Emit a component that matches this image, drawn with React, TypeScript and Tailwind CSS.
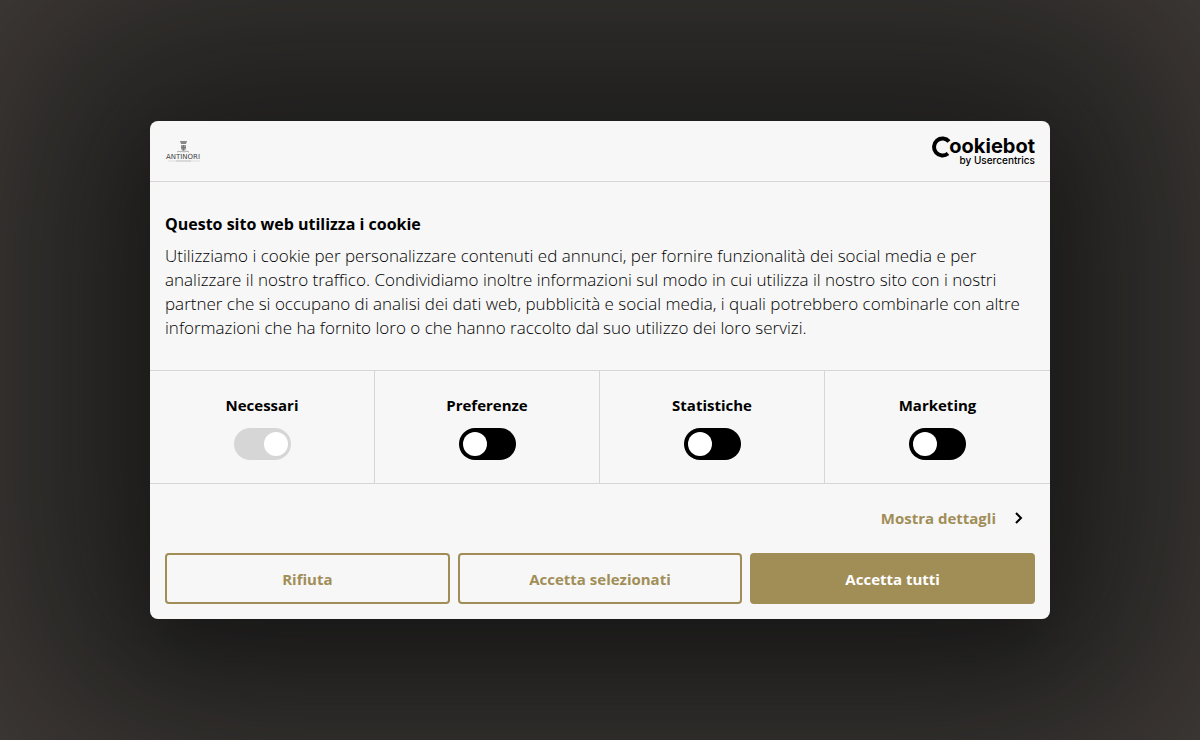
import { useState } from "react";

type Category = {
  id: string;
  label: string;
  locked?: boolean;
};

const CATEGORIES: Category[] = [
  { id: "necessary", label: "Necessari", locked: true },
  { id: "preferences", label: "Preferenze" },
  { id: "statistics", label: "Statistiche" },
  { id: "marketing", label: "Marketing" },
];

function AntinoriLogo() {
  return (
    <svg width="37" height="22" viewBox="0 0 37 22" role="img" aria-label="Antinori">
      <path d="M15 1h7l-1 3h-5z" fill="#888" />
      <path d="M16 5h5v4l-2 2h-1l-2-2z" fill="#999" />
      <path d="M18 5h1v5h-1zM16 7h5v1h-5z" fill="#777" />
      <path d="M12 12l2-1 1 1 2-1 2 1 2-1 3 1" fill="none" stroke="#aaa" strokeWidth="1" />
      <text
        x="18"
        y="19"
        textAnchor="middle"
        fontFamily="DejaVu Sans, sans-serif"
        fontSize="7"
        fill="#444"
      >
        ANTINORI
      </text>
      <path d="M3 21h8M26 21h9" stroke="#ddd" strokeWidth="1" />
      <path d="M11 21h15" stroke="#bbb" strokeWidth="1" />
    </svg>
  );
}

function CookiebotLogo() {
  return (
    <svg width="104" height="32" viewBox="0 0 104 32" role="img" aria-label="Cookiebot by Usercentrics">
      <path d="M18 6.5a8.5 8.5 0 1 0-1 12" fill="none" stroke="#000" strokeWidth="4" />
      <text
        x="104"
        y="18"
        textAnchor="end"
        fontFamily="Inter, sans-serif"
        fontSize="20"
        fontWeight="700"
        fill="#000"
      >
        ookiebot
      </text>
      <text
        x="104"
        y="29"
        textAnchor="end"
        fontFamily="Inter, sans-serif"
        fontSize="10"
        fontWeight="500"
        fill="#000"
      >
        by Usercentrics
      </text>
    </svg>
  );
}

function Toggle({ category }: { category: Category }) {
  const [checked, setChecked] = useState(Boolean(category.locked));

  return (
    <label className="flex flex-col items-center gap-[11px] border-r border-[#d6d6d6] pt-[22px] pb-[23px] last:border-r-0">
      <span className="text-[15px] leading-6 font-bold text-black">{category.label}</span>
      <input
        type="checkbox"
        id={category.id}
        checked={checked}
        disabled={category.locked}
        onChange={(e) => setChecked(e.target.checked)}
        className="flex h-8 w-[57px] appearance-none items-center rounded-full bg-black px-1 before:h-6 before:w-6 before:rounded-full before:bg-white checked:justify-end checked:bg-[#a18e57] disabled:bg-[#d6d6d6] disabled:pr-[3px]"
      />
    </label>
  );
}

export default function App() {
  return (
    <div className="flex min-h-screen items-center justify-center overflow-hidden bg-[#47413d] font-['Open_Sans',sans-serif]">
      <div
        role="dialog"
        aria-labelledby="consent-title"
        className="w-3/4 rounded-lg bg-[#f7f7f7] text-base text-black shadow-[0_0_300px_150px_rgba(8,10,12,0.66),0_32px_68px_rgba(0,0,0,0.3)]"
      >
        <header className="flex h-[61px] items-center justify-between border-b border-[#d6d6d6] px-[15px]">
          <AntinoriLogo />
          <CookiebotLogo />
        </header>

        <section className="px-[15px] py-[30px]">
          <h1 id="consent-title" className="mb-2 leading-6 font-bold">
            Questo sito web utilizza i cookie
          </h1>
          <p className="text-[17px] leading-6 font-light text-black">
            Utilizziamo i cookie per personalizzare contenuti ed annunci, per fornire funzionalità dei social media e
            per analizzare il nostro traffico. Condividiamo inoltre informazioni sul modo in cui utilizza il nostro sito
            con i nostri partner che si occupano di analisi dei dati web, pubblicità e social media, i quali potrebbero
            combinarle con altre informazioni che ha fornito loro o che hanno raccolto dal suo utilizzo dei loro servizi.
          </p>
        </section>

        <fieldset className="grid grid-cols-4 border-y border-[#d6d6d6]">
          {CATEGORIES.map((category) => (
            <Toggle key={category.id} category={category} />
          ))}
        </fieldset>

        <footer className="px-[15px] pb-[15px]">
          <div className="flex h-[69px] items-center justify-end pr-3 pb-0.5">
            <a href="#details" className="flex items-center gap-[18px] text-[15px] leading-6 font-bold text-[#a18e57]">
              Mostra dettagli
              <svg width="9" height="12" viewBox="0 0 9 12" fill="none" stroke="#000" strokeWidth="2" aria-hidden="true">
                <path d="M2 1l5 5-5 5" />
              </svg>
            </a>
          </div>
          <div className="grid grid-cols-3 gap-2 text-[15px] leading-6 font-bold">
            <button type="button" className="h-[51px] rounded border-2 border-[#a18e57] text-[#a18e57]">
              Rifiuta
            </button>
            <button type="button" className="h-[51px] rounded border-2 border-[#a18e57] text-[#a18e57]">
              Accetta selezionati
            </button>
            <button type="button" className="h-[51px] rounded border-2 border-[#a18e57] bg-[#a18e57] text-white">
              Accetta tutti
            </button>
          </div>
        </footer>
      </div>
    </div>
  );
}
